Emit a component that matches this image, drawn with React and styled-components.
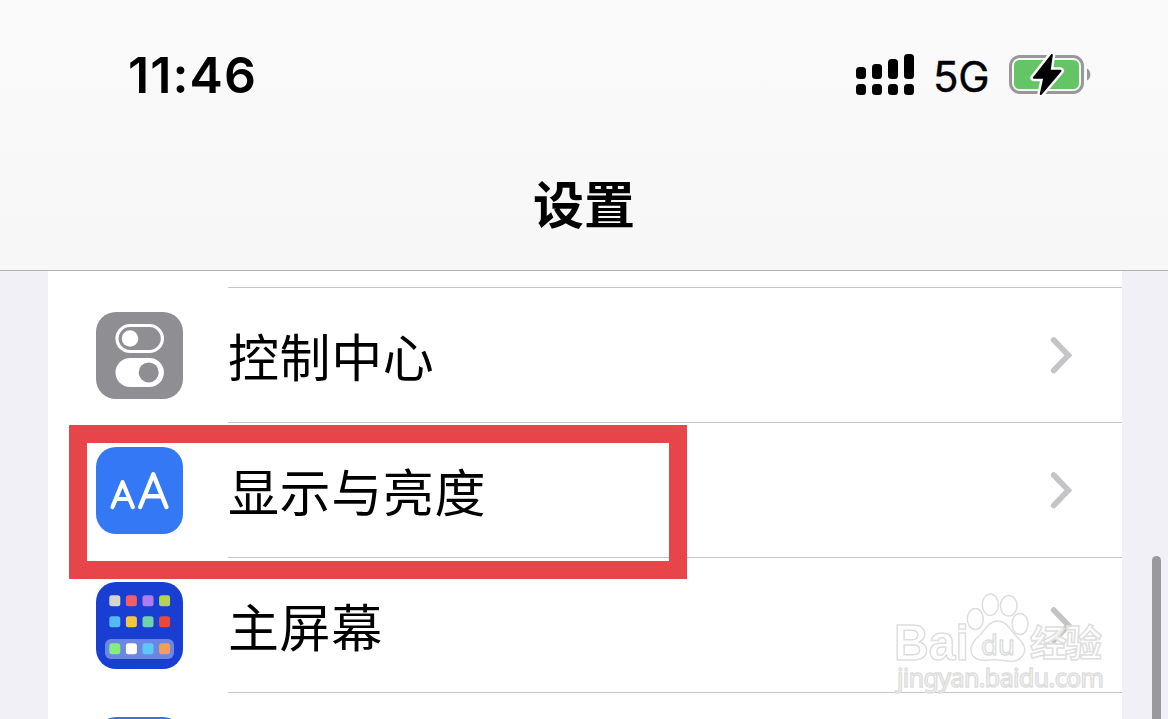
import React from "react";
import styled, { createGlobalStyle } from "styled-components";

const rows = [
  { label: "控制中心", icon: <ControlIcon /> },
  { label: "显示与亮度", icon: <DisplayIcon />, marked: true },
  { label: "主屏幕", icon: <HomeIcon /> },
];

const apps = [
  ["#d6d6d0", "#ee5f6b", "#b07cf5", "#b6d255"],
  ["#55b9f8", "#f7c544", "#6ed3ac", "#e8493c"],
  ["#82ee82", "#ffffff", "#5ec8fa", "#f0a05a"],
];

const signal = [12, 15, 20, 25];

export default function App() {
  return (
    <Screen>
      <GlobalStyle />
      <Header>
        <StatusBar>
          <Time>11:46</Time>
          <StatusRight>
            <Signal>
              {signal.map((height) => (
                <SignalColumn key={height}>
                  <SignalBar $height={height} />
                  <SignalBar $height={11} />
                </SignalColumn>
              ))}
            </Signal>
            <Network>5G</Network>
            <Battery />
          </StatusRight>
        </StatusBar>
        <Title>设置</Title>
      </Header>
      <Body>
        <List>
          <PreviousRow />
          {rows.map((row) => (
            <Row key={row.label}>
              <IconTile>{row.icon}</IconTile>
              <RowContent>
                <Label>{row.label}</Label>
                <Chevron />
              </RowContent>
              {row.marked && <Marker />}
            </Row>
          ))}
          <Row>
            <NextTile />
          </Row>
        </List>
        <ScrollThumb />
        <Watermark />
      </Body>
    </Screen>
  );
}

function Battery() {
  const bolt = "M43.8 4L25.8 26.8H36.3L32.8 43L52.5 19.8H41.6Z";

  return (
    <BatterySvg width="84" height="46" viewBox="0 0 84 46">
      <rect x="2.5" y="5.5" width="72" height="36" rx="9.5" fill="none" stroke="#98989a" strokeWidth="3" />
      <rect x="6" y="9" width="65" height="29" rx="5.5" fill="#65c466" />
      <path d="M79 17.5C83.5 19.5 83.5 27.5 79 29.5Z" fill="#98989a" />
      <path d={bolt} fill="#fafafa" stroke="#fafafa" strokeWidth="7" strokeLinejoin="round" />
      <path d={bolt} fill="#000" stroke="#000" strokeWidth="2" strokeLinejoin="round" />
    </BatterySvg>
  );
}

function ControlIcon() {
  return (
    <svg width="87" height="87" viewBox="0 0 87 87">
      <rect width="87" height="87" rx="20" fill="#8e8e93" />
      <rect x="21" y="13.5" width="45.4" height="26" rx="13" fill="none" stroke="#fff" strokeWidth="3.2" />
      <circle cx="34" cy="26.5" r="8.3" fill="#fff" />
      <rect x="19.5" y="46" width="48.4" height="29" rx="14.5" fill="#fff" />
      <circle cx="52.7" cy="60.4" r="10" fill="#8e8e93" />
    </svg>
  );
}

function DisplayIcon() {
  return (
    <svg width="87" height="87" viewBox="0 0 87 87">
      <rect width="87" height="87" rx="20" fill="#3478f6" />
      <g fill="none" stroke="#fff" strokeLinecap="round" strokeLinejoin="round">
        <path d="M16.5 60L26.6 35.2L36.8 60M20 52H33" strokeWidth="4.2" />
        <path d="M44.2 60L57.3 27.2L70.4 60M48.6 49.3H66" strokeWidth="4.4" />
      </g>
    </svg>
  );
}

function HomeIcon() {
  return (
    <svg width="87" height="87" viewBox="0 0 87 87">
      <rect width="87" height="87" rx="20" fill="#183fd2" />
      <rect x="9" y="57" width="69" height="20" rx="6" fill="#6c86e3" />
      {apps.map((line, i) =>
        line.map((color, j) => (
          <rect
            key={color}
            x={13.3 + j * 16.6}
            y={[13.3, 34.3, 61.3][i]}
            width="11"
            height="11"
            rx="2.5"
            fill={color}
          />
        ))
      )}
    </svg>
  );
}

function Chevron() {
  return (
    <svg width="24" height="40" viewBox="0 0 24 40">
      <path
        d="M3.7 5L18.4 20.3L3.7 35.5"
        fill="none"
        stroke="#c4c4c6"
        strokeWidth="5.6"
        strokeLinecap="round"
        strokeLinejoin="miter"
      />
    </svg>
  );
}

function Watermark() {
  return (
    <WatermarkSvg width="220" height="110" viewBox="0 0 220 110">
      <g fill="#fff" fillOpacity="0.75" stroke="#dedede" strokeWidth="1.5">
        <ellipse cx="85.3" cy="28" rx="8" ry="10.5" />
        <ellipse cx="100.3" cy="13.7" rx="8" ry="10.8" />
        <ellipse cx="118.7" cy="14.7" rx="8.3" ry="10.3" />
        <ellipse cx="130" cy="33" rx="8" ry="10.5" />
        <path d="M107.5 30C98 30 95 40 88 46C81 52 79 60 83 65C89 72 99 68 108 69C117 69.5 127 73 132.5 65C137 59 134 52 128 47C120 40 118 30 107.5 30Z" />
        <WatermarkText x="4" y="69" textLength="75" lengthAdjust="spacingAndGlyphs" $size={50} $bold>
          Bai
        </WatermarkText>
        <WatermarkText x="91" y="63.5" textLength="34" lengthAdjust="spacingAndGlyphs" $size={28}>
          du
        </WatermarkText>
        <WatermarkText x="140" y="66" textLength="72" $size={37} $bold>
          经验
        </WatermarkText>
        <WatermarkText x="7" y="95.5" textLength="207" $size={25}>
          jingyan.baidu.com
        </WatermarkText>
      </g>
    </WatermarkSvg>
  );
}

const GlobalStyle = createGlobalStyle`
  * {
    box-sizing: border-box;
  }
  body {
    margin: 0;
    overflow: hidden;
    font-family: Inter, "Noto Sans CJK SC", sans-serif;
    color: #000;
  }
  svg {
    display: block;
    flex-shrink: 0;
  }
`;

const Screen = styled.div`
  display: flex;
  flex-direction: column;
  width: 1168px;
  height: 719px;
  overflow: hidden;
  background-color: #f1f0f6;
`;

const Header = styled.header`
  flex: none;
  height: 271px;
  background: linear-gradient(#fafafb, #f7f7f7);
  border-bottom: 1px solid #b0b0b2;
`;

const StatusBar = styled.div`
  display: flex;
  justify-content: space-between;
  align-items: center;
  height: 149px;
  padding: 0 76px 0 128px;
`;

const Time = styled.div`
  font-size: 50px;
  font-weight: 600;
  line-height: 60px;
  letter-spacing: 1.1px;
`;

const StatusRight = styled.div`
  display: flex;
  align-items: center;
`;

const Signal = styled.div`
  display: flex;
  align-items: flex-end;
  gap: 6px;
`;

const SignalColumn = styled.div`
  display: flex;
  flex-direction: column;
  gap: 5px;
`;

const SignalBar = styled.div`
  width: 10px;
  height: ${(props) => props.$height}px;
  border-radius: 3.5px;
  background-color: #000;
`;

const Network = styled.div`
  width: 56px;
  margin: 4px 19px 0;
  font-size: 42px;
  line-height: 50px;
  letter-spacing: -0.3px;
  -webkit-text-stroke: 0.4px #000;
`;

const BatterySvg = styled.svg`
  margin-bottom: 2px;
`;

const Title = styled.h1`
  margin: 15px 0 0;
  font-family: "Noto Sans CJK SC", sans-serif;
  font-size: 51px;
  font-weight: 600;
  line-height: 76px;
  text-align: center;
`;

const Body = styled.main`
  position: relative;
  flex: 1;
  padding: 0 46px 0 48px;
`;

const List = styled.div`
  height: 448px;
  overflow: hidden;
  background-color: #fff;
`;

const PreviousRow = styled.div`
  height: 17px;
  margin-left: 180px;
  border-bottom: 1px solid #c6c6c8;
`;

const Row = styled.div`
  position: relative;
  display: flex;
  height: 135px;
  padding-left: 48px;
`;

const IconTile = styled.div`
  width: 132px;
  padding-top: 24px;
`;

const RowContent = styled.div`
  flex: 1;
  display: flex;
  justify-content: space-between;
  align-items: center;
  padding-right: 48px;
  border-bottom: 1px solid #c6c6c8;
`;

const Label = styled.div`
  font-family: "Noto Sans CJK SC", sans-serif;
  font-size: 51px;
  line-height: 76px;
  letter-spacing: 0.6px;
`;

// frame laid over the highlighted row and its neighbours
const Marker = styled.div`
  position: absolute;
  top: 2px;
  left: 21px;
  z-index: 1;
  width: 618px;
  height: 154px;
  border: 18px solid #e8454a;
`;

const NextTile = styled.div`
  width: 87px;
  height: 87px;
  margin-top: 24px;
  border-radius: 20px;
  background-color: #3478d6;
`;

const ScrollThumb = styled.div`
  position: absolute;
  top: 285px;
  right: 7px;
  width: 9px;
  height: 180px;
  border-radius: 5px;
  background-color: #9a9a9d;
`;

const WatermarkSvg = styled.svg`
  position: absolute;
  top: 320px;
  left: 890px;
`;

const WatermarkText = styled.text`
  font-family: ${(props) =>
    props.$bold
      ? '"Liberation Sans", "Noto Sans CJK SC", sans-serif'
      : '"Noto Sans", sans-serif'};
  font-size: ${(props) => props.$size}px;
  font-weight: ${(props) => (props.$bold ? 700 : 400)};
`;
